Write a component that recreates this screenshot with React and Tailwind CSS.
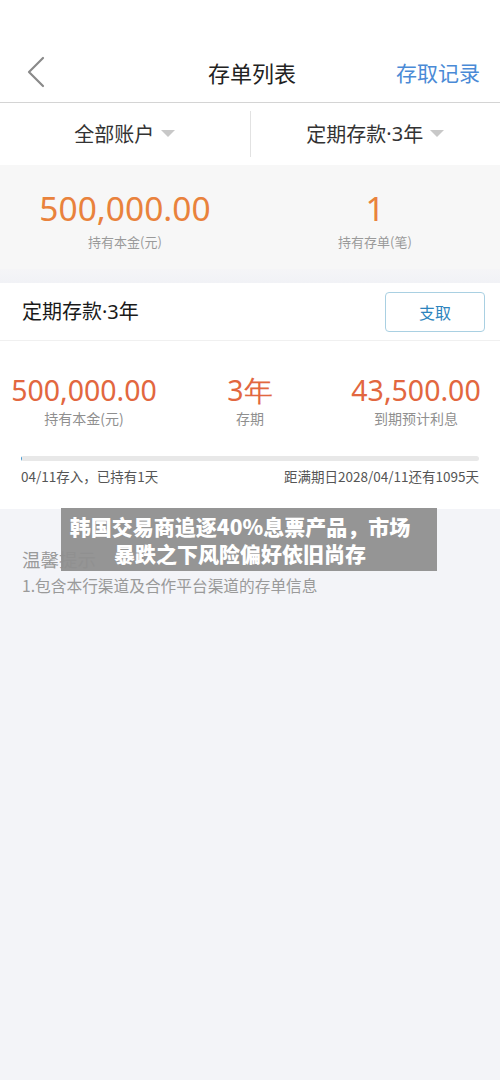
import React from "react";

const font = { fontFamily: '"Noto Sans CJK SC", "Noto Sans", sans-serif' };
const latin = { fontFamily: '"Noto Sans", sans-serif' };

function Caret() {
  return (
    <svg width="14" height="8" viewBox="0 0 14 8" className="ml-[7px]">
      <path d="M0 0 L14 0 L7 7 Z" fill="#c8c8c8" />
    </svg>
  );
}

function Dot() {
  return <span style={latin}>·3</span>;
}

export default function App() {
  return (
    <div style={font} className="w-[500px] h-[1080px] bg-[#f3f4f8] relative overflow-hidden">
      {/* Header */}
      <div className="h-[103px] bg-white border-b border-[#d4d4d4] flex items-end pb-[14px] pl-[24px] pr-[20px] relative">
        <div className="w-[86px] flex items-center h-[32px]">
          <svg width="22" height="32" viewBox="0 0 22 32">
            <path d="M19 2 L5 16 L19 30" stroke="#8a8a8a" strokeWidth="2.2" fill="none" strokeLinecap="round" strokeLinejoin="round" />
          </svg>
        </div>
        <div className="flex-1 text-center text-[22px] text-[#222] leading-[32px]">存单列表</div>
        <div className="w-[86px] text-right text-[21px] text-[#4a8ad6] leading-[32px] whitespace-nowrap">存取记录</div>
      </div>

      {/* Filter row */}
      <div className="h-[62px] bg-white flex items-center">
        <div className="flex-1 flex items-center justify-center text-[20px] text-[#333]">
          全部账户
          <Caret />
        </div>
        <div className="w-[1px] h-[46px] bg-[#e2e2e2]" />
        <div className="flex-1 flex items-center justify-center text-[20px] text-[#333]">
          定期存款<Dot />年
          <Caret />
        </div>
      </div>

      {/* Summary */}
      <div className="h-[104px] bg-[#f7f7f7] flex">
        <div className="flex-1 flex flex-col items-center pt-[23px]">
          <div className="text-[33.5px] leading-[41px] text-[#e9823c]" style={latin}>500,000.00</div>
          <div className="text-[13px] text-[#9a9a9a] mt-[3px]">持有本金(元)</div>
        </div>
        <div className="flex-1 flex flex-col items-center pt-[23px]">
          <div className="text-[33.5px] leading-[41px] text-[#e9823c]" style={latin}>1</div>
          <div className="text-[13px] text-[#9a9a9a] mt-[3px]">持有存单(笔)</div>
        </div>
      </div>
      <div className="h-[14px] bg-gradient-to-b from-[#f5f5f7] to-[#f1f2f6]" />

      {/* Card */}
      <div className="bg-white">
        <div className="h-[58px] flex items-center justify-between pl-[22px] pr-[15px] border-b border-[#f0f0f0]">
          <div className="text-[20px] text-[#1a1a1a]">定期存款<Dot />年</div>
          <div className="w-[100px] h-[40px] border border-[#a9d0e2] rounded-[4px] flex items-center justify-center text-[16px] text-[#2d84bd]">
            支取
          </div>
        </div>
        <div className="flex pt-[31px]">
          <div className="w-[168px] flex flex-col items-center">
            <div className="text-[28.5px] leading-[36px] text-[#e2673f]" style={latin}>500,000.00</div>
            <div className="text-[14px] text-[#8f8f8f] leading-[20px]">持有本金(元)</div>
          </div>
          <div className="w-[164px] flex flex-col items-center">
            <div className="text-[28.5px] leading-[36px] text-[#e2673f]" style={latin}>3年</div>
            <div className="text-[14px] text-[#8f8f8f] leading-[20px]">存期</div>
          </div>
          <div className="w-[168px] flex flex-col items-center">
            <div className="text-[28.5px] leading-[36px] text-[#e2673f]" style={latin}>43,500.00</div>
            <div className="text-[14px] text-[#8f8f8f] leading-[20px]">到期预计利息</div>
          </div>
        </div>
        <div className="px-[21px] pt-[28px]">
          <div className="h-[5px] rounded-full bg-[#e8e8e8] overflow-hidden">
            <div className="h-full w-[1px] bg-[#4a9ad0]" />
          </div>
          <div className="flex justify-between text-[13.5px] text-[#555] mt-[6px] leading-[18px]">
            <span>04/11存入，已持有1天</span>
            <span>距满期日2028/04/11还有1095天</span>
          </div>
        </div>
        <div className="h-[24px]" />
      </div>

      {/* Tips */}
      <div className="px-[22px] pt-[38px]">
        <div className="text-[18.5px] text-[#9a9a9a] leading-[24px]">温馨提示</div>
        <div className="text-[15.7px] text-[#9a9a9a] mt-[5px] leading-[20px]">1.包含本行渠道及合作平台渠道的存单信息</div>
      </div>

      {/* Overlay caption */}
      <div className="absolute left-[61px] top-[508px] w-[376px] h-[63px] bg-[#8f8f8f]/95 flex items-center justify-center pr-[18px]">
        <div className="text-white font-black text-[21px] leading-[27px] text-center whitespace-nowrap">
          韩国交易商追逐40%息票产品，市场
          <br />
          暴跌之下风险偏好依旧尚存
        </div>
      </div>
    </div>
  );
}
